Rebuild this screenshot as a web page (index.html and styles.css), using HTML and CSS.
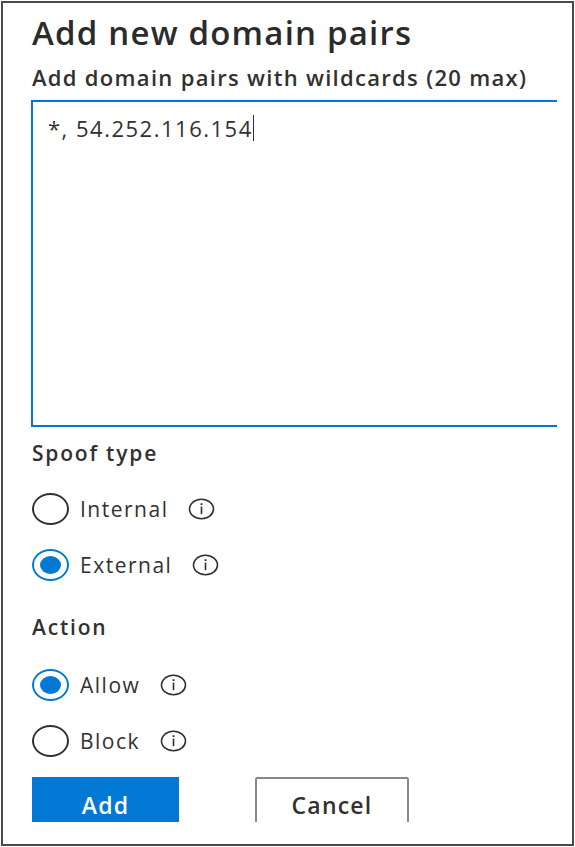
FILE: index.html
```html
<!DOCTYPE html>
<html>
  <head>
    <title>Add new domain pairs</title>
    <link rel="stylesheet" href="styles.css">
  </head>
  <body>
    <div class="frame">
      <div class="panel">
        <h1 class="title">Add new domain pairs</h1>
        <div class="label">Add domain pairs with wildcards (20 max)</div>
        <div class="pairs">
          <span class="pairs-text">*, 54.252.116.154</span><span class="caret"></span>
        </div>

        <div class="group-label">Spoof type</div>
        <div class="option">
          <span class="radio"></span>
          <span class="option-text">Internal</span>
          <svg class="info" width="27" height="22" viewBox="0 0 27 22">
            <ellipse cx="13.5" cy="11" rx="12" ry="9.8" fill="none" stroke="#323130" stroke-width="1.6"/>
            <rect x="12.6" y="5.2" width="1.8" height="1.8" fill="#323130"/>
            <rect x="12.7" y="8.6" width="1.6" height="7.6" fill="#323130"/>
          </svg>
        </div>
        <div class="option">
          <span class="radio checked"></span>
          <span class="option-text">External</span>
          <svg class="info" width="27" height="22" viewBox="0 0 27 22">
            <ellipse cx="13.5" cy="11" rx="12" ry="9.8" fill="none" stroke="#323130" stroke-width="1.6"/>
            <rect x="12.6" y="5.2" width="1.8" height="1.8" fill="#323130"/>
            <rect x="12.7" y="8.6" width="1.6" height="7.6" fill="#323130"/>
          </svg>
        </div>

        <div class="group-label action">Action</div>
        <div class="option">
          <span class="radio checked"></span>
          <span class="option-text">Allow</span>
          <svg class="info" width="27" height="22" viewBox="0 0 27 22">
            <ellipse cx="13.5" cy="11" rx="12" ry="9.8" fill="none" stroke="#323130" stroke-width="1.6"/>
            <rect x="12.6" y="5.2" width="1.8" height="1.8" fill="#323130"/>
            <rect x="12.7" y="8.6" width="1.6" height="7.6" fill="#323130"/>
          </svg>
        </div>
        <div class="option">
          <span class="radio"></span>
          <span class="option-text">Block</span>
          <svg class="info" width="27" height="22" viewBox="0 0 27 22">
            <ellipse cx="13.5" cy="11" rx="12" ry="9.8" fill="none" stroke="#323130" stroke-width="1.6"/>
            <rect x="12.6" y="5.2" width="1.8" height="1.8" fill="#323130"/>
            <rect x="12.7" y="8.6" width="1.6" height="7.6" fill="#323130"/>
          </svg>
        </div>

        <div class="buttons">
          <button class="btn btn-primary">Add</button>
          <button class="btn btn-default">Cancel</button>
        </div>
      </div>
    </div>
  </body>
</html>
```

FILE: styles.css
```css
body {
  margin: 0;
  background: #ffffff;
  font-family: "Open Sans", "Noto Sans", sans-serif;
  color: #323130;
}
.frame {
  margin: 1px;
  width: 573px;
  height: 845px;
  box-sizing: border-box;
  border: 2px solid #4a4a4a;
}
.panel {
  width: 554px;
  height: 819px;
  box-sizing: border-box;
  padding: 10px 0 0 29px;
  overflow: hidden;
}
.title {
  margin: 0;
  font-size: 33px;
  line-height: 40px;
  font-weight: 600;
  letter-spacing: 1.2px;
  color: #2b2b2b;
  white-space: nowrap;
}
.label {
  margin-top: 10px;
  font-size: 22px;
  line-height: 28px;
  font-weight: 600;
  letter-spacing: 1.3px;
  white-space: nowrap;
}
.pairs {
  margin-top: 9px;
  margin-left: -1px;
  width: 640px;
  height: 327px;
  box-sizing: border-box;
  border: 2px solid #0078d4;
  padding: 13px 0 0 15px;
  font-size: 22px;
  line-height: 26px;
  letter-spacing: 1.5px;
  display: flex;
  align-items: flex-start;
}
.caret {
  display: inline-block;
  width: 1px;
  height: 26px;
  background: #323130;
}
.group-label {
  margin-top: 12px;
  font-size: 21px;
  line-height: 28px;
  font-weight: 600;
  letter-spacing: 1.8px;
}
.group-label.action {
  margin-top: 20px;
}
.option {
  height: 56px;
  display: flex;
  align-items: center;
}
.group-label + .option {
  margin-top: 14px;
}
.group-label.action + .option {
  margin-top: 16px;
}
.radio {
  width: 37px;
  height: 32px;
  box-sizing: border-box;
  border: 2px solid #323130;
  border-radius: 50%;
  display: flex;
  align-items: center;
  justify-content: center;
}
.radio.checked {
  border-color: #0078d4;
}
.radio.checked::after {
  content: "";
  width: 21px;
  height: 18px;
  border-radius: 50%;
  background: #0078d4;
}
.option-text {
  margin-left: 11px;
  font-size: 21px;
  line-height: 28px;
  letter-spacing: 1.5px;
}
.info {
  margin-left: 20px;
}
.buttons {
  margin-top: 8px;
  display: flex;
  gap: 76px;
}
.btn {
  height: 56px;
  box-sizing: border-box;
  font-family: "Open Sans", "Noto Sans", sans-serif;
  font-size: 23px;
  font-weight: 600;
  letter-spacing: 1.2px;
  padding: 0;
}
.btn-primary {
  width: 147px;
  background: #0078d4;
  border: 2px solid #0078d4;
  color: #ffffff;
}
.btn-default {
  width: 154px;
  background: #ffffff;
  border: 2px solid #8a8886;
  border-radius: 2px;
  color: #323130;
}
```
